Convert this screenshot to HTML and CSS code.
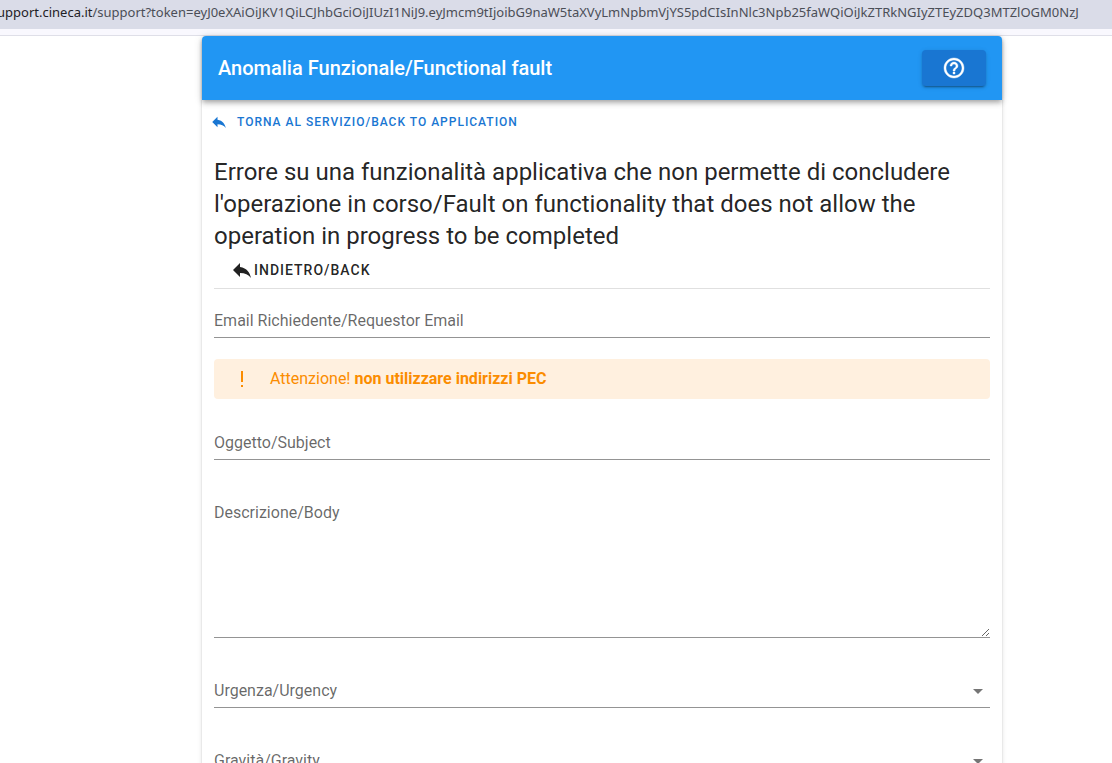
FILE: index.html
```html
<!DOCTYPE html>
<html lang="it">
<head>
    <meta charset="UTF-8">
    <meta name="viewport" content="width=device-width, initial-scale=1.0">
    <title>Anomalia Funzionale/Functional fault</title>
    <link rel="stylesheet" href="styles.css">
</head>
<body>
    <!-- address bar -->
    <div class="address-bar"><span class="host">upport.cineca.it</span>/support?token=eyJ0eXAiOiJKV1QiLCJhbGciOiJIUzI1NiJ9.eyJmcm9tIjoibG9naW5taXVyLmNpbmVjYS5pdCIsInNlc3Npb25faWQiOiJkZTRkNGIyZTEyZDQ3MTZlOGM0NzJ</div>
    <div class="browser-strip"></div>

    <main class="page">
        <div class="card">
            <header class="toolbar">
                <div class="toolbar-title">Anomalia Funzionale/Functional fault</div>
                <button type="button" class="help-button" aria-label="Help">
                    <svg width="24" height="24" viewBox="0 0 24 24"><path stroke="currentColor" stroke-width=".4" d="M11 18h2v-2h-2v2zm1-16C6.480 2 2 6.480 2 12s4.480 10 10 10 10-4.480 10-10S17.520 2 12 2zm0 18c-4.410 0-8-3.590-8-8s3.590-8 8-8 8 3.590 8 8-3.590 8-8 8zm0-14c-2.210 0-4 1.790-4 4h2c0-1.100.9-2 2-2s2 .9 2 2c0 2-3 1.750-3 5h2c0-2.250 3-2.500 3-5 0-2.210-1.790-4-4-4z"/></svg>
                </button>
            </header>

            <a class="app-link" href="#">
                <svg width="18" height="18" viewBox="0 0 24 24"><path d="M10 9V5l-7 7 7 7v-4.100c5 0 8.500 1.600 11 5.100-1-5-4-10-11-11z"/></svg>
                TORNA AL SERVIZIO/BACK TO APPLICATION
            </a>

            <div class="content">
                <h1>Errore su una funzionalità applicativa che non permette di concludere l'operazione in corso/Fault on functionality that does not allow the operation in progress to be completed</h1>
                <button type="button" class="back-button">
                    <svg width="24" height="24" viewBox="0 0 24 24"><path d="M10 9V5l-7 7 7 7v-4.100c5 0 8.500 1.600 11 5.100-1-5-4-10-11-11z"/></svg>
                    INDIETRO/BACK
                </button>

                <form>
                    <div class="field">
                        <label for="email">Email Richiedente/Requestor Email</label>
                        <input type="email" id="email">
                    </div>

                    <div class="alert" role="alert">
                        <svg width="24" height="24" viewBox="0 0 24 24"><path d="M11 4h2v11h-2zM11 18h2v2h-2z"/></svg>
                        <div>Attenzione! <strong>non utilizzare indirizzi PEC</strong></div>
                    </div>

                    <div class="field">
                        <label for="subject">Oggetto/Subject</label>
                        <input type="text" id="subject">
                    </div>
                    <div class="field">
                        <label for="body">Descrizione/Body</label>
                        <textarea id="body"></textarea>
                    </div>
                    <div class="field">
                        <label for="urgency">Urgenza/Urgency</label>
                        <select id="urgency"><option value=""></option></select>
                        <svg class="arrow" width="24" height="24" viewBox="0 0 24 24"><path d="M7 10l5 5 5-5z"/></svg>
                    </div>
                    <div class="field">
                        <label for="gravity">Gravità/Gravity</label>
                        <select id="gravity"><option value=""></option></select>
                        <svg class="arrow" width="24" height="24" viewBox="0 0 24 24"><path d="M7 10l5 5 5-5z"/></svg>
                    </div>
                </form>
            </div>
        </div>
    </main>
</body>
</html>
```

FILE: styles.css
```css
* {
    box-sizing: border-box;
}
body {
    margin: 0;
    height: 100vh;
    overflow: hidden;
    background: #fff;
    color: rgba(0, 0, 0, 0.87);
    font-family: Roboto, sans-serif;
    font-size: 16px;
    line-height: 24px;
}
svg {
    fill: currentColor;
    flex: none;
}

/* address bar */
.address-bar {
    height: 29px;
    background: #dadce8;
    color: #4b4e57;
    font-family: "Noto Sans", sans-serif;
    font-size: 13px;
    line-height: 24px;
    white-space: nowrap;
    overflow: hidden;
    text-indent: -3px;
}
.host {
    color: #1f2126;
}
.browser-strip {
    height: 7px;
    background: #f9f8fe;
    border-bottom: 1px solid #dfdfe8;
}

/* card */
.page {
    padding-left: 92px;
}
.card {
    max-width: 800px;
    margin: 0 auto;
    border-radius: 4px;
    box-shadow: 0 3px 1px -2px rgba(0, 0, 0, 0.2), 0 2px 2px 0 rgba(0, 0, 0, 0.14), 0 1px 5px 0 rgba(0, 0, 0, 0.12);
}
.toolbar {
    display: flex;
    align-items: center;
    justify-content: space-between;
    height: 64px;
    padding: 0 16px;
    background: #2196f3;
    color: #fff;
    border-radius: 4px 4px 0 0;
    box-shadow: 0 2px 4px -1px rgba(0, 0, 0, 0.2), 0 4px 5px 0 rgba(0, 0, 0, 0.14), 0 1px 10px 0 rgba(0, 0, 0, 0.12);
}
.toolbar-title {
    font-size: 20px;
    font-weight: 500;
}
.help-button {
    display: flex;
    align-items: center;
    justify-content: center;
    width: 64px;
    height: 36px;
    padding: 0;
    border: none;
    border-radius: 4px;
    background: #1976d2;
    color: #fff;
    cursor: pointer;
    box-shadow: 0 3px 1px -2px rgba(0, 0, 0, 0.2), 0 2px 2px 0 rgba(0, 0, 0, 0.14), 0 1px 5px 0 rgba(0, 0, 0, 0.12);
}
.app-link {
    display: flex;
    align-items: center;
    gap: 9px;
    height: 44px;
    padding: 0 8px;
    color: #1976d2;
    font-size: 12px;
    font-weight: 500;
    letter-spacing: 1px;
    text-decoration: none;
}

/* content */
.content {
    padding: 12px;
}
h1 {
    margin: 0;
    font-size: 24px;
    font-weight: 400;
    line-height: 32px;
}
.back-button {
    display: flex;
    align-items: center;
    height: 36px;
    padding: 0 16px;
    border: none;
    background: none;
    color: inherit;
    font-family: inherit;
    font-size: 14px;
    font-weight: 500;
    letter-spacing: 1px;
    cursor: pointer;
}
form {
    border-top: 1px solid #e0e0e0;
    padding-top: 17px;
}

/* form fields */
.field {
    position: relative;
    margin-bottom: 38px;
}
.field label {
    position: absolute;
    top: 3px;
    left: 0;
    color: rgba(0, 0, 0, 0.6);
    pointer-events: none;
}
.field input,
.field select,
.field textarea {
    display: block;
    width: 100%;
    height: 32px;
    padding: 0;
    border: none;
    border-bottom: 1px solid #949494;
    border-radius: 0;
    outline: none;
    background: none;
    color: inherit;
    font: inherit;
    appearance: none;
}
.field textarea {
    height: 140px;
    resize: vertical;
}
.arrow {
    position: absolute;
    top: 3px;
    right: 0;
    color: rgba(0, 0, 0, 0.54);
    pointer-events: none;
}
.alert {
    display: flex;
    align-items: center;
    gap: 16px;
    height: 40px;
    margin: -17px 0 29px;
    padding: 0 16px;
    border-radius: 4px;
    background: #fff0df;
    color: #fb8c00;
}
```
